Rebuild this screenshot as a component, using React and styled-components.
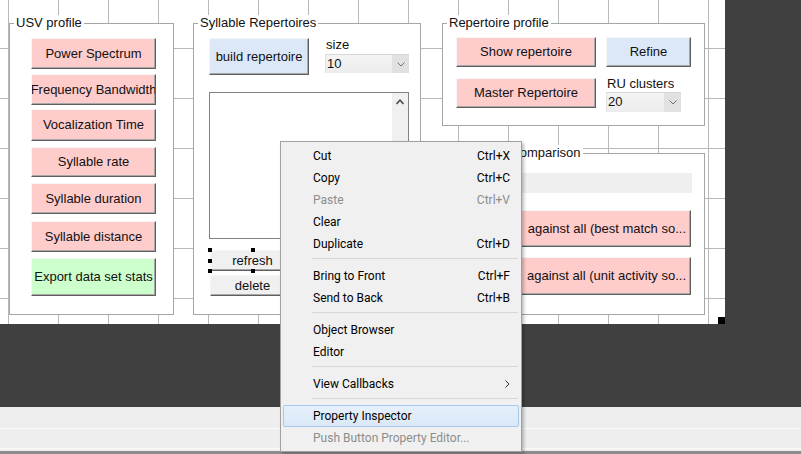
import React from 'react';
import styled, { createGlobalStyle } from 'styled-components';

const GlobalStyle = createGlobalStyle`
  html, body { margin: 0; padding: 0; width: 801px; height: 454px; overflow: hidden; background: #404040; }
  #root { width: 801px; height: 454px; }
  *, *::before, *::after { box-sizing: border-box; }
`;

const tones = {
  pink: '#ffcccc',
  green: '#ccffcc',
  blue: '#dce8f8',
  gray: '#f0f0f0',
};

const Window = styled.div`
  position: relative;
  width: 801px;
  height: 454px;
  display: flex;
  flex-direction: column;
  font-family: "Liberation Sans", Arial, sans-serif;
  font-size: 13px;
  color: #111;
  overflow: hidden;
`;

const Workspace = styled.div`
  height: 407px;
  background: #404040;
  display: flex;
  align-items: flex-start;
`;

const Canvas = styled.div`
  position: relative;
  width: 725px;
  height: 324px;
  background-color: #fff;
  background-image:
    linear-gradient(to right, #b8b8b8 1px, transparent 1px),
    linear-gradient(to bottom, #b8b8b8 1px, transparent 1px);
  background-size: 50px 50px, 50px 50px;
  background-position: 8px 0, 0 48px;
  display: flex;
  align-items: flex-start;
  padding: 23px 0 0 9px;
`;

const ResizeGrip = styled.div`
  position: absolute;
  right: 0;
  bottom: 0;
  width: 7px;
  height: 7px;
  background: #000;
`;

const Panel = styled.div`
  position: relative;
  flex-shrink: 0;
  width: ${p => p.$w}px;
  height: ${p => p.$h}px;
  margin-left: ${p => p.$ml || 0}px;
  margin-top: ${p => p.$mt || 0}px;
  border: 1px solid #a6a6a6;
  background: #fff;
  display: flex;
  flex-direction: column;
  align-items: flex-start;
  padding-left: ${p => p.$pl || 0}px;
`;

const PanelTitle = styled.span`
  position: absolute;
  top: -9px;
  left: 4px;
  padding: 0 2px;
  background: #fff;
  line-height: 16px;
  white-space: nowrap;
  color: #111;
`;

const RightColumn = styled.div`
  display: flex;
  flex-direction: column;
  margin-left: 21px;
`;

const Row = styled.div`
  display: flex;
  align-items: flex-start;
  margin-top: ${p => p.$mt || 0}px;
`;

const FieldColumn = styled.div`
  display: flex;
  flex-direction: column;
  margin-left: ${p => p.$ml || 0}px;
  margin-top: ${p => p.$mt || 0}px;
`;

const Label = styled.span`
  line-height: 15px;
  padding-left: 1px;
  white-space: nowrap;
  color: #111;
`;

const PushButton = styled.button`
  appearance: none;
  flex-shrink: 0;
  display: flex;
  align-items: center;
  justify-content: ${p => (p.$align === 'right' ? 'flex-end' : 'center')};
  width: ${p => p.$w}px;
  height: ${p => p.$h}px;
  margin: ${p => p.$mt || 0}px 0 0 ${p => p.$ml || 0}px;
  padding: 0 ${p => (p.$align === 'right' ? 4 : 0)}px 1px 0;
  font: 13px "Liberation Sans", Arial, sans-serif;
  color: #111;
  white-space: nowrap;
  overflow: hidden;
  background: ${p => tones[p.$tone || 'pink']};
  border-style: solid;
  border-width: 1px;
  border-color: #f6f6f6 #5f5f5f #5f5f5f #f6f6f6;
  box-shadow: inset -1px -1px 0 #a8a8a8;
  cursor: default;
`;

const Popup = styled.div`
  display: flex;
  align-items: stretch;
  width: ${p => p.$w}px;
  height: ${p => p.$h}px;
  margin-top: ${p => p.$mt || 0}px;
  background: linear-gradient(#f4f4f4, #ececec);
  border-top: 1px solid #d6d6d6;
  border-left: 1px solid #e2e2e2;
`;

const PopupValue = styled.span`
  flex: 1;
  padding-left: 1px;
  line-height: 18px;
  color: #111;
`;

const PopupArrow = styled.span`
  width: 17px;
  display: flex;
  align-items: center;
  justify-content: center;
  background: #e1e1e1;
`;

const Listbox = styled.div`
  display: flex;
  justify-content: flex-end;
  width: 200px;
  height: 147px;
  margin: 17px 0 0 15px;
  border: 1px solid #828282;
  background: #fff;
`;

const ScrollTrack = styled.div`
  width: 16px;
  background: #f0f0f0;
  display: flex;
  justify-content: center;
  padding-top: 6px;
`;

const InfoBar = styled.div`
  width: 236px;
  height: 20px;
  margin-top: 19px;
  background: #efefef;
`;

const Selected = styled.div`
  position: relative;
  margin: ${p => p.$mt}px 0 0 ${p => p.$ml}px;
`;

const Handle = styled.span`
  position: absolute;
  width: 4px;
  height: 4px;
  background: #000;
  left: ${p => p.$x}%;
  top: ${p => p.$y}%;
  transform: translate(-50%, -50%);
`;

const StatusArea = styled.div`
  flex: 1;
  display: flex;
  flex-direction: column;
  background: #eeeeee;
`;

const StatusBar = styled.div`
  height: ${p => p.$h}px;
  border-bottom: 1px solid #fbfbfb;
`;

const StatusGap = styled.div`
  height: 2px;
`;

const BottomEdge = styled.div`
  height: 3px;
  background: #8c8c8c;
`;

const Menu = styled.div`
  position: absolute;
  left: 280px;
  top: 141px;
  width: 242px;
  height: 311px;
  padding: 3px 0 2px;
  background: #f0f0f0;
  border: 1px solid #a0a0a0;
  box-shadow: 2px 2px 3px rgba(0, 0, 0, 0.25);
  font-family: Roboto, "Noto Sans", sans-serif;
  font-size: 12px;
  color: #000;
`;

const MenuItem = styled.div`
  display: flex;
  align-items: center;
  height: 22px;
  margin: 0 2px;
  padding: 0 8px 0 29px;
  border: 1px solid ${p => (p.$active ? '#a6c8ee' : 'transparent')};
  border-radius: 2px;
  background: ${p => (p.$active ? 'linear-gradient(#e6f0fb, #dae8f7)' : 'transparent')};
  color: ${p => (p.$disabled ? '#8d8d8d' : '#000')};
  white-space: nowrap;
`;

const MenuLabel = styled.span`
  flex: 1;
`;

const Shortcut = styled.span`
  color: inherit;
`;

const MenuSeparator = styled.div`
  height: 1px;
  margin: 3px 3px 6px 31px;
  background: #d7d7d7;
`;

const ChevronDown = () => (
  <svg width="8" height="5" viewBox="0 0 8 5">
    <polyline points="0.5,0.5 4,4 7.5,0.5" fill="none" stroke="#707070" strokeWidth="1" />
  </svg>
);

const ChevronUp = () => (
  <svg width="8" height="6" viewBox="0 0 8 6">
    <polyline points="0.5,5 4,1.2 7.5,5" fill="none" stroke="#505050" strokeWidth="1.6" />
  </svg>
);

const ChevronRight = () => (
  <svg width="5" height="8" viewBox="0 0 5 8">
    <polyline points="0.5,0.5 4,4 0.5,7.5" fill="none" stroke="#333" strokeWidth="1" />
  </svg>
);

const usvButtons = [
  { label: 'Power Spectrum', mt: 14, h: 31 },
  { label: 'Frequency Bandwidth', mt: 5, h: 31 },
  { label: 'Vocalization Time', mt: 4, h: 32 },
  { label: 'Syllable rate', mt: 6, h: 30 },
  { label: 'Syllable duration', mt: 6, h: 31 },
  { label: 'Syllable distance', mt: 7, h: 31 },
  { label: 'Export data set stats', mt: 6, h: 38, tone: 'green' },
];

const menuEntries = [
  { label: 'Cut', key: 'Ctrl+X' },
  { label: 'Copy', key: 'Ctrl+C' },
  { label: 'Paste', key: 'Ctrl+V', disabled: true },
  { label: 'Clear' },
  { label: 'Duplicate', key: 'Ctrl+D' },
  { sep: true },
  { label: 'Bring to Front', key: 'Ctrl+F' },
  { label: 'Send to Back', key: 'Ctrl+B' },
  { sep: true },
  { label: 'Object Browser' },
  { label: 'Editor' },
  { sep: true },
  { label: 'View Callbacks', submenu: true },
  { sep: true },
  { label: 'Property Inspector', active: true },
  { label: 'Push Button Property Editor...', disabled: true },
];

const handles = [
  [0, 0], [50, 0], [100, 0],
  [0, 50], [100, 50],
  [0, 100], [50, 100], [100, 100],
];

function PopupMenu({ value, w, h, mt }) {
  return (
    <Popup $w={w} $h={h} $mt={mt}>
      <PopupValue>{value}</PopupValue>
      <PopupArrow>
        <ChevronDown />
      </PopupArrow>
    </Popup>
  );
}

export default function App() {
  return (
    <>
      <GlobalStyle />
      <Window>
        <Workspace>
          <Canvas>
            <Panel $w={165} $h={292} $pl={21}>
              <PanelTitle>USV profile</PanelTitle>
              {usvButtons.map(b => (
                <PushButton key={b.label} $w={125} $h={b.h} $mt={b.mt} $tone={b.tone}>
                  {b.label}
                </PushButton>
              ))}
            </Panel>

            <Panel $w={228} $h={292} $ml={19}>
              <PanelTitle>Syllable Repertoires</PanelTitle>
              <Row $mt={14}>
                <PushButton $w={100} $h={37} $ml={15} $tone="blue">build repertoire</PushButton>
                <FieldColumn $ml={16} $mt={-1}>
                  <Label>size</Label>
                  <PopupMenu value="10" w={84} h={19} mt={2} />
                </FieldColumn>
              </Row>
              <Listbox>
                <ScrollTrack>
                  <ChevronUp />
                </ScrollTrack>
              </Listbox>
              <Selected $mt={11} $ml={16}>
                <PushButton $w={85} $h={21} $tone="gray">refresh</PushButton>
                {handles.map(([x, y]) => (
                  <Handle key={`${x}-${y}`} $x={x} $y={y} />
                ))}
              </Selected>
              <PushButton $w={85} $h={21} $mt={4} $ml={16} $tone="gray">delete</PushButton>
            </Panel>

            <RightColumn>
              <Panel $w={263} $h={103} $pl={13}>
                <PanelTitle>Repertoire profile</PanelTitle>
                <Row $mt={13}>
                  <PushButton $w={140} $h={30}>Show repertoire</PushButton>
                  <PushButton $w={85} $h={30} $ml={10} $tone="blue">Refine</PushButton>
                </Row>
                <Row $mt={9}>
                  <PushButton $w={140} $h={30} $mt={2}>Master Repertoire</PushButton>
                  <FieldColumn $ml={10}>
                    <Label>RU clusters</Label>
                    <PopupMenu value="20" w={75} h={20} mt={1} />
                  </FieldColumn>
                </Row>
              </Panel>

              <Panel $w={263} $h={162} $mt={27} $pl={13}>
                <PanelTitle>Repertoire comparison</PanelTitle>
                <InfoBar />
                <PushButton $w={235} $h={37} $mt={17} $align="right">
                  against all (best match so...
                </PushButton>
                <PushButton $w={235} $h={38} $mt={10} $align="right">
                  against all (unit activity so...
                </PushButton>
              </Panel>
            </RightColumn>

            <ResizeGrip />
          </Canvas>
        </Workspace>

        <StatusArea>
          <StatusBar $h={22} />
          <StatusBar $h={20} />
          <StatusGap />
          <BottomEdge />
        </StatusArea>

        <Menu>
          {menuEntries.map((e, i) =>
            e.sep ? (
              <MenuSeparator key={`sep-${i}`} />
            ) : (
              <MenuItem key={e.label} $active={e.active} $disabled={e.disabled}>
                <MenuLabel>{e.label}</MenuLabel>
                {e.key && <Shortcut>{e.key}</Shortcut>}
                {e.submenu && <ChevronRight />}
              </MenuItem>
            )
          )}
        </Menu>
      </Window>
    </>
  );
}
